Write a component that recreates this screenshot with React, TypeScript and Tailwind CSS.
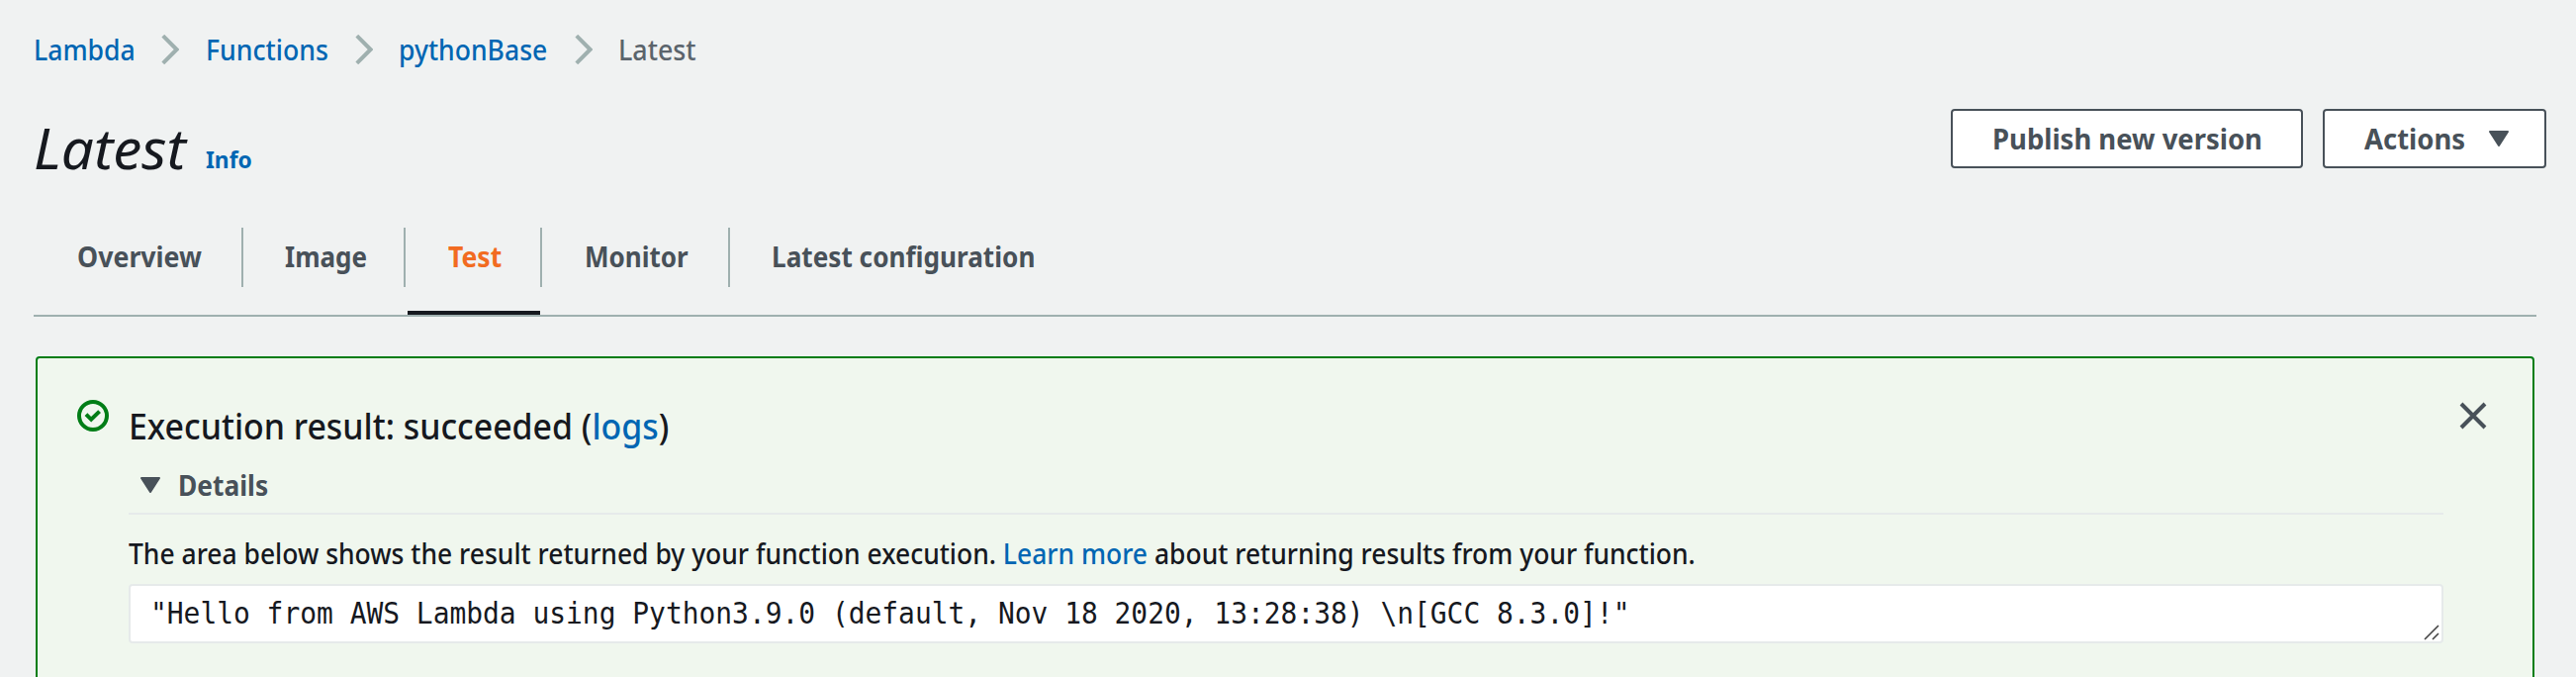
import type { ReactNode } from "react";

function Scaled({ box, scale, children }: { box: string; scale: string; children: ReactNode }) {
  return (
    <span className={`block shrink-0 whitespace-nowrap ${box}`}>
      <span className={`inline-block origin-left ${scale}`}>{children}</span>
    </span>
  );
}

function Chevron() {
  return (
    <svg className="block h-[30px] w-[18px] shrink-0" viewBox="0 0 18 30" fill="none">
      <path d="M1.8 1.2 L15.6 15 L1.8 28.8" stroke="#9fb0af" strokeWidth="4" />
    </svg>
  );
}

function Caret({ className }: { className: string }) {
  return (
    <svg className={`block h-4 w-5 shrink-0 ${className}`} viewBox="0 0 20 16">
      <path d="M1 1 H19 L10 15 Z" fill="#485159" stroke="#485159" strokeWidth="2" strokeLinejoin="round" />
    </svg>
  );
}

function Divider() {
  return <div className="h-[60px] w-[2px] shrink-0 bg-[#9fb0af]" />;
}

export default function App() {
  return (
    <div className="flex h-[684px] w-[2604px] flex-col overflow-hidden bg-[#f0f2f2] font-['Noto_Sans',sans-serif] text-[28px] leading-[40px] font-medium text-[#16191f]">
      <nav className="mt-[29px] flex h-[42px] shrink-0 items-center pl-[34px] text-[#0066b3]">
        <Scaled box="w-[128.5px]" scale="scale-x-[0.95]">Lambda</Scaled>
        <Chevron />
        <Scaled box="ml-[27px] w-[151px]" scale="scale-x-[0.952]">Functions</Scaled>
        <Chevron />
        <Scaled box="ml-[26px] w-[178px]" scale="scale-x-[0.948]">pythonBase</Scaled>
        <Chevron />
        <Scaled box="ml-[26px] w-[90px] text-[#5b646c]" scale="scale-x-[0.957]">Latest</Scaled>
      </nav>

      <header className="flex h-[159px] shrink-0 pt-[37px] pr-[30px] pl-[34px]">
        <h1 className="text-[56px] leading-[82px] font-normal italic">
          <Scaled box="w-[174px]" scale="scale-x-[1.04]">Latest</Scaled>
        </h1>
        <div className="pt-[33px] text-[24px] font-bold text-[#0066b3]">
          <Scaled box="w-[60px]" scale="scale-x-[0.95]">Info</Scaled>
        </div>
        <div className="mt-[2px] ml-auto flex h-[60px] gap-[20px] font-bold text-[#485159]">
          <button className="flex w-[356px] items-center rounded-[4px] border-2 border-[#485159] bg-white pl-[40px] text-left">
            <Scaled box="w-[280px]" scale="scale-x-[0.98]">Publish new version</Scaled>
          </button>
          <button className="flex w-[226px] items-center rounded-[4px] border-2 border-[#485159] bg-white pl-[40px] text-left">
            <Scaled box="w-[126px]" scale="scale-x-[0.98]">Actions</Scaled>
            <Caret className="" />
          </button>
        </div>
      </header>

      <div className="mr-[40px] ml-[34px] flex h-[90px] shrink-0 border-b-2 border-[#9fb0af] font-bold text-[#485159]">
        <div className="w-[210px] pt-[9px] pl-[44px]">
          <Scaled box="w-[160px]" scale="scale-x-[0.955]">Overview</Scaled>
        </div>
        <Divider />
        <div className="w-[162px] pt-[9px] pl-[42px]">
          <Scaled box="w-[110px]" scale="scale-x-[0.93]">Image</Scaled>
        </div>
        <Divider />
        <div className="ml-[2px] w-[134px] border-b-4 border-[#16191f] pt-[9px] pl-[41px] text-[#f26b21]">
          <Scaled box="w-[80px]" scale="scale-x-[0.95]">Test</Scaled>
        </div>
        <Divider />
        <div className="w-[188px] pt-[9px] pl-[43px]">
          <Scaled box="w-[130px]" scale="scale-x-[0.93]">Monitor</Scaled>
        </div>
        <Divider />
        <div className="pt-[9px] pl-[42px]">
          <Scaled box="w-[280px]" scale="scale-x-[0.935]">Latest configuration</Scaled>
        </div>
      </div>

      <section className="mt-[40px] mr-[42px] ml-[36px] flex h-[400px] shrink-0 rounded-[4px] border-2 border-[#007d16] bg-[#f0f7ee]">
        <svg className="mt-[42px] ml-[40px] block size-[32px] shrink-0" viewBox="0 0 32 32" fill="none" stroke="#007d16" strokeWidth="4">
          <circle cx="16" cy="16" r="14" />
          <path d="M9 14.6 L14.2 19.8 L22.6 11.6" />
        </svg>
        <div className="ml-[20px] w-[2340px] shrink-0 pt-[43px]">
          <h2 className="text-[36px] leading-[52px] font-medium">
            <Scaled box="w-[600px]" scale="scale-x-[0.941]">
              Execution result: succeeded (<a className="text-[#0066b3]">logs</a>)
            </Scaled>
          </h2>
          <div className="flex h-[63px] border-b-2 border-[#e6eaea] pt-[13px] font-bold text-[#485159]">
            <Caret className="mt-[12px] ml-[12px]" />
            <Scaled box="ml-[18px] w-[120px]" scale="scale-x-[0.94]">Details</Scaled>
          </div>
          <p className="h-[70px] pt-[19px]">
            <Scaled box="w-[1700px]" scale="scale-x-[0.945]">
              The area below shows the result returned by your function execution.{" "}
              <a className="text-[#0066b3]">Learn more</a> about returning results from your function.
            </Scaled>
          </p>
          <div className="relative flex h-[60px] items-center rounded-[4px] border-2 border-[#e6eaea] bg-white pl-[20px] font-['DejaVu_Sans_Mono',monospace] text-[30px] font-normal">
            <Scaled box="w-[1600px]" scale="scale-x-[0.9303]">
              {'"Hello from AWS Lambda using Python3.9.0 (default, Nov 18 2020, 13:28:38) \\n[GCC 8.3.0]!"'}
            </Scaled>
            <svg className="absolute right-[2px] bottom-[1px] size-[16px]" viewBox="0 0 16 16" stroke="#444" strokeWidth="1.6">
              <path d="M1 15 L15 1 M9 15 L15 9" />
            </svg>
          </div>
        </div>
        <svg className="mt-[44px] ml-[16px] block size-[28px] shrink-0" viewBox="0 0 28 28" stroke="#485159" strokeWidth="4">
          <path d="M2 2 L26 26 M26 2 L2 26" />
        </svg>
      </section>
    </div>
  );
}
